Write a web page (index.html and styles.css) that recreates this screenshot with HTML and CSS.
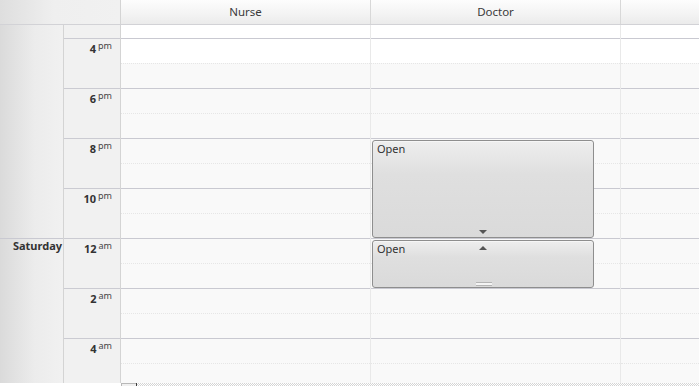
FILE: index.html
```html
<!DOCTYPE html>
<html lang="en">
<head>
  <meta charset="UTF-8">
  <title>Scheduler - Timeline</title>
  <link rel="stylesheet" href="styles.css">
</head>
<body>
  <div class="scheduler">
    <div class="head">
      <div class="corner"></div>
      <div class="res">Nurse</div>
      <div class="res">Doctor</div>
      <div class="res res-last"></div>
    </div>

    <div class="view">
      <div class="days">
        <div class="day day-prev"></div>
        <div class="day">Saturday</div>
      </div>

      <div class="times">
        <div class="slot-top"></div>
        <div class="hour"><b>4</b><span class="ampm">pm</span></div>
        <div class="hour"><b>6</b><span class="ampm">pm</span></div>
        <div class="hour"><b>8</b><span class="ampm">pm</span></div>
        <div class="hour"><b>10</b><span class="ampm">pm</span></div>
        <div class="hour"><b>12</b><span class="ampm">am</span></div>
        <div class="hour"><b>2</b><span class="ampm">am</span></div>
        <div class="hour"><b>4</b><span class="ampm">am</span></div>
      </div>

      <div class="col">
        <div class="slot-top work"></div>
        <div class="cell"><div class="half work"></div><div class="half"></div></div>
        <div class="cell"><div class="half"></div><div class="half"></div></div>
        <div class="cell"><div class="half"></div><div class="half"></div></div>
        <div class="cell"><div class="half"></div><div class="half"></div></div>
        <div class="cell"><div class="half"></div><div class="half"></div></div>
        <div class="cell"><div class="half"></div><div class="half"></div></div>
        <div class="cell"><div class="half"></div><div class="half"></div></div>
      </div>

      <div class="col">
        <div class="slot-top work"></div>
        <div class="cell"><div class="half work"></div><div class="half"></div></div>
        <div class="cell"><div class="half"></div><div class="half"></div></div>
        <div class="cell"><div class="half"></div><div class="half"></div></div>
        <div class="cell"><div class="half"></div><div class="half"></div></div>
        <div class="cell"><div class="half"></div><div class="half"></div></div>
        <div class="cell"><div class="half"></div><div class="half"></div></div>
        <div class="cell"><div class="half"></div><div class="half"></div></div>

        <div class="appt appt-long">
          Open
          <span class="arrow-down"></span>
        </div>
        <div class="appt appt-short">
          Open
          <span class="arrow-up"></span>
          <span class="grip"></span>
        </div>
      </div>

      <div class="col col-last">
        <div class="slot-top work"></div>
        <div class="cell"><div class="half work"></div><div class="half"></div></div>
        <div class="cell"><div class="half"></div><div class="half"></div></div>
        <div class="cell"><div class="half"></div><div class="half"></div></div>
        <div class="cell"><div class="half"></div><div class="half"></div></div>
        <div class="cell"><div class="half"></div><div class="half"></div></div>
        <div class="cell"><div class="half"></div><div class="half"></div></div>
        <div class="cell"><div class="half"></div><div class="half"></div></div>
      </div>
    </div>

    <div class="hscroll">
      <div class="hscroll-gap"></div>
      <div class="hscroll-btn"></div>
      <div class="hscroll-track"></div>
    </div>
  </div>
</body>
</html>
```

FILE: styles.css
```css
/* Reset */
* { margin: 0; padding: 0; box-sizing: border-box; }
html, body {
  height: 100%;
  overflow: hidden;
  background: #ffffff;
  font-family: 'Noto Sans', 'Open Sans', sans-serif;
  color: #333333;
}

.scheduler {
  width: 699px;
  height: 386px;
  display: flex;
  flex-direction: column;
}

/* Resource header */
.head {
  display: grid;
  grid-template-columns: 121px 250px 250px 1fr;
  height: 25px;
  border-bottom: 1px solid #d2d2d6;
}
.corner {
  border-right: 1px solid #d4d4d4;
  background: linear-gradient(to right, #dedede, #efefef 45%, #f1f1f1);
}
.res {
  border-right: 1px solid #d8d8d8;
  background: linear-gradient(#fdfdfd, #f3f3f3 60%, #ebebeb);
  font-size: 11.5px;
  line-height: 23px;
  text-align: center;
  color: #3a3a3a;
}
.res-last { border-right: none; }

/* Main view */
.view {
  display: grid;
  grid-template-columns: 64px 57px 250px 250px 1fr;
  height: 358px;
  overflow: hidden;
}

.days {
  border-right: 1px solid #d4d4d4;
  background: linear-gradient(to right, #dadada, #ececec 55%, #f1f1f1);
}
.day {
  border-top: 1px solid #c9c9d1;
  text-align: right;
  padding-right: 1px;
  font-size: 11px;
  font-weight: bold;
  line-height: 13px;
  color: #333333;
}
.day-prev {
  height: 213px;
  border-top: none;
}

.times {
  border-right: 1px solid #d4d4d4;
  background: #f1f1f1;
}
.slot-top { height: 13px; }
.hour {
  height: 50px;
  border-top: 1px solid #cbcbd2;
  text-align: right;
  padding-right: 8px;
  font-size: 11px;
  line-height: 13px;
}
.hour b { color: #333333; }
.ampm {
  font-size: 9px;
  margin-left: 2px;
  vertical-align: 4px;
  color: #444444;
}

/* Resource columns */
.col {
  position: relative;
  border-right: 1px solid #e9e9e9;
  background: #f9f9f9;
}
.col-last { border-right: none; }
.work { background: #ffffff; }
.cell {
  height: 50px;
  border-top: 1px solid #c9c9d1;
}
.half { height: 24px; }
.half + .half {
  height: 25px;
  border-top: 1px dotted #e6e6e6;
}

/* Appointments */
.appt {
  position: absolute;
  left: 1px;
  width: 222px;
  border: 1px solid #8e8e8e;
  border-radius: 3px;
  background: linear-gradient(#eeeeee, #dfdfdf 35%, #dadada);
  box-shadow: inset 0 1px 0 #f6f6f6;
  font-size: 11px;
  line-height: 13px;
  padding: 1px 4px;
  color: #333333;
}
.appt-long { top: 115px; height: 98px; }
.appt-short { top: 215px; height: 48px; }

.arrow-down, .arrow-up {
  position: absolute;
  left: 106px;
  width: 0;
  height: 0;
  border-left: 4px solid transparent;
  border-right: 4px solid transparent;
}
.arrow-down {
  bottom: 3px;
  border-top: 4px solid #555555;
}
.arrow-up {
  top: 5px;
  border-bottom: 4px solid #555555;
}
.grip {
  position: absolute;
  left: 103px;
  bottom: 1px;
  width: 16px;
  height: 4px;
  border-top: 1px solid #b4b4b4;
  border-bottom: 1px solid #b4b4b4;
  background: #f4f4f4;
}

/* Horizontal scrollbar (cut off by the window) */
.hscroll {
  display: flex;
  height: 3px;
}
.hscroll-gap { width: 121px; background: #ffffff; }
.hscroll-btn {
  width: 15px;
  border-top: 1px solid #b8b8b8;
  border-left: 1px solid #b8b8b8;
  background: #f0f0f0;
}
.hscroll-track {
  flex: 1;
  border-left: 1px solid #3c3c3c;
  background: repeating-conic-gradient(#d4d4d4 0 25%, #ffffff 0 50%) 0 0 / 2px 2px;
}
```
